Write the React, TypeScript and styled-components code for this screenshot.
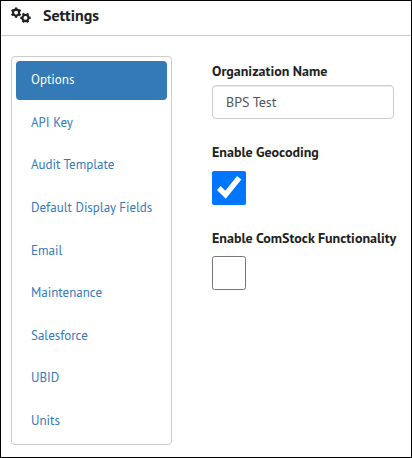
import React from "react";
import styled, { createGlobalStyle } from "styled-components";

const GlobalStyle = createGlobalStyle`
  * { box-sizing: border-box; }
  body { margin: 0; background: #fff; }
`;

const Frame = styled.div`
  display: flex;
  flex-direction: column;
  width: 412px;
  height: 458px;
  border: 1px solid #000;
  background: #fff;
  color: #212121;
  font-family: "PT Sans", "Noto Sans", sans-serif;
  font-size: 14px;
  overflow: hidden;
`;

const Header = styled.header`
  display: flex;
  align-items: flex-start;
  gap: 11px;
  height: 35px;
  padding: 4px 10px 0;
  border-bottom: 1px solid #ccc;
`;

const HeaderIcon = styled.svg`
  width: 21px;
  height: 17px;
  margin-top: 2px;
`;

const Title = styled.h1`
  margin: 0;
  font-size: 16px;
  font-weight: 700;
  line-height: 20px;
`;

const Body = styled.div`
  display: flex;
  gap: 40px;
  padding: 20px 10px 0;
`;

const Sidebar = styled.nav`
  display: flex;
  flex-direction: column;
  gap: 3.65px;
  width: 161px;
  height: 389px;
  padding: 4px;
  border: 1px solid #ccc;
  border-radius: 4px;
`;

const NavItem = styled.a<{ $active?: boolean }>`
  display: flex;
  align-items: center;
  flex: 0 0 39px;
  padding: 0 15px 2px;
  border-radius: 4px;
  color: ${(p) => (p.$active ? "#fff" : "#337ab7")};
  background: ${(p) => (p.$active ? "#337ab7" : "transparent")};
  font-size: 13px;
  white-space: nowrap;
`;

const Form = styled.form`
  display: flex;
  flex-direction: column;
  align-items: flex-start;
  padding-top: 5px;
`;

const Label = styled.label`
  height: 20px;
  line-height: 20px;
  font-weight: 700;
  white-space: nowrap;
`;

const TextInput = styled.input`
  width: 182px;
  height: 34px;
  margin: 4px 0 23px;
  padding: 0 13px;
  border: 1px solid #ccc;
  border-radius: 4px;
  outline: none;
  color: #555;
  background: #fff;
  box-shadow: inset 0 1px 1px rgba(0, 0, 0, 0.075);
  font: inherit;
`;

const Checkbox = styled.input`
  width: 34px;
  height: 34px;
  margin: 9px 0 23px;

  &:last-child {
    margin-top: 8px;
  }
`;

const sections = [
  "Options",
  "API Key",
  "Audit Template",
  "Default Display Fields",
  "Email",
  "Maintenance",
  "Salesforce",
  "UBID",
  "Units",
];

function Gear({ cx, cy, turn }: { cx: number; cy: number; turn: number }) {
  return (
    <g transform={`translate(${cx} ${cy}) rotate(${turn})`} stroke="#212121" fill="none">
      <circle r="3" strokeWidth="2.1" />
      {[0, 60, 120].map((a) => (
        <path
          key={a}
          d="M0-5.2V-3.4M0 3.4V5.2"
          strokeWidth="2.4"
          transform={`rotate(${a})`}
        />
      ))}
    </g>
  );
}

export default function App() {
  return (
    <Frame>
      <GlobalStyle />
      <Header>
        <HeaderIcon viewBox="0 0 21 17" aria-hidden="true">
          <Gear cx={5.1} cy={5.6} turn={0} />
          <Gear cx={14.5} cy={10.9} turn={30} />
        </HeaderIcon>
        <Title>Settings</Title>
      </Header>
      <Body>
        <Sidebar>
          {sections.map((name) => (
            <NavItem key={name} $active={name === "Options"}>
              {name}
            </NavItem>
          ))}
        </Sidebar>
        <Form>
          <Label htmlFor="org">Organization Name</Label>
          <TextInput id="org" defaultValue="BPS Test" />
          <Label htmlFor="geo">Enable Geocoding</Label>
          <Checkbox id="geo" type="checkbox" defaultChecked />
          <Label htmlFor="comstock">Enable ComStock Functionality</Label>
          <Checkbox id="comstock" type="checkbox" />
        </Form>
      </Body>
    </Frame>
  );
}
